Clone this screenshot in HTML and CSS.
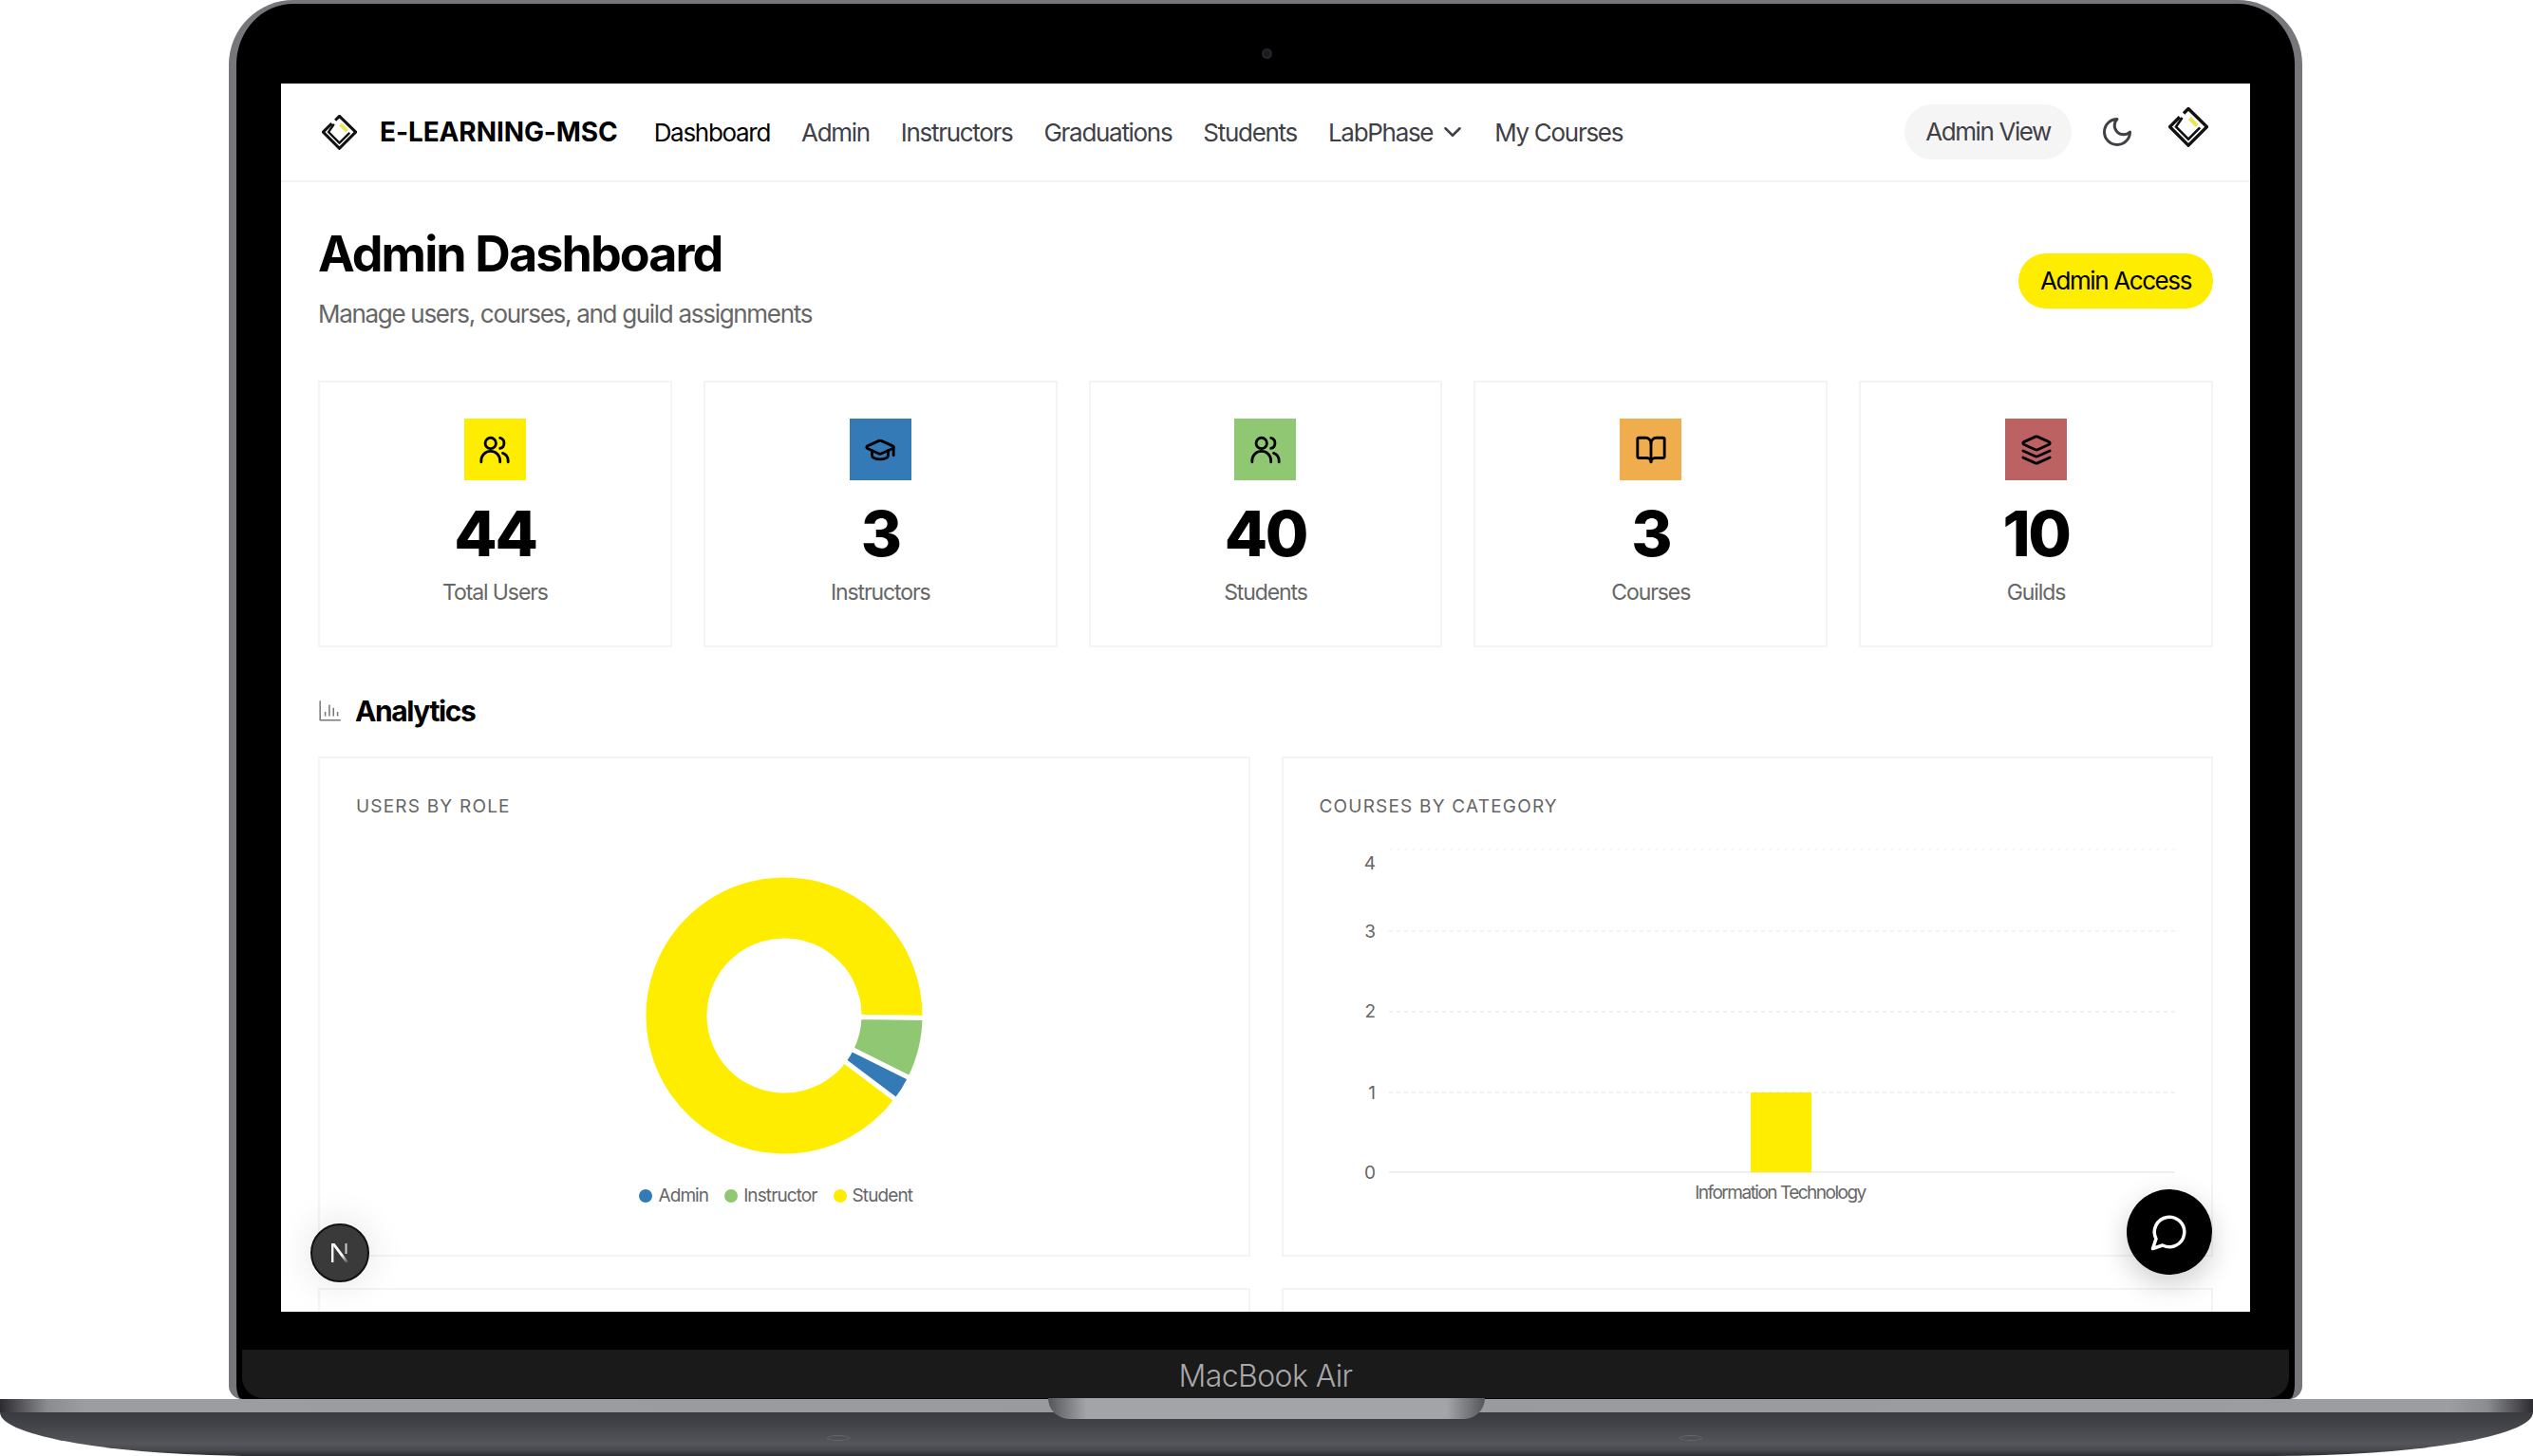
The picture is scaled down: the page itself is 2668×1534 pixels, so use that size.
FILE: index.html
```html
<!DOCTYPE html>
<html lang="en">
<head>
    <meta charset="UTF-8">
    <meta name="viewport" content="width=device-width, initial-scale=1.0">
    <title>Admin Dashboard</title>
    <link rel="stylesheet" href="styles.css">
</head>
<body>
    <svg class="defs" width="0" height="0">
        <symbol id="logo" viewBox="0 0 110 110">
            <path class="logo-yellow" d="M58 30 79 51"/>
            <path class="logo-line" d="M31 27 4 54 55 105 106 54 55 4 42 17"/>
            <path class="logo-thin" d="M38 29 21 54 55 88 87 56"/>
        </symbol>
    </svg>

    <div class="lid">
        <span class="camera"></span>
        <div class="screen">
            <nav class="nav">
                <svg class="logo"><use href="#logo"/></svg>
                <span class="brand">E-LEARNING-MSC</span>
                <a class="link active">Dashboard</a>
                <a class="link">Admin</a>
                <a class="link">Instructors</a>
                <a class="link">Graduations</a>
                <a class="link">Students</a>
                <a class="link link-menu">LabPhase
                    <svg class="icon chevron" viewBox="0 0 24 24"><path d="m6 9 6 6 6-6"/></svg>
                </a>
                <a class="link">My Courses</a>
                <span class="view-pill">Admin View</span>
                <svg class="icon moon" viewBox="0 0 24 24"><path d="M12 3a6 6 0 0 0 9 9 9 9 0 1 1-9-9Z"/></svg>
                <svg class="logo logo-user"><use href="#logo"/></svg>
            </nav>

            <main class="main">
                <header class="head">
                    <div>
                        <h1>Admin Dashboard</h1>
                        <p>Manage users, courses, and guild assignments</p>
                    </div>
                    <span class="access">Admin Access</span>
                </header>

                <section class="stats">
                    <div class="stat">
                        <span class="stat-icon yellow">
                            <svg class="icon" viewBox="0 0 24 24"><circle cx="9" cy="7" r="4"/><path d="M2 21v-1a7 7 0 0 1 14 0v1"/><path d="M22 21v-1a6 6 0 0 0-4-5.6"/><path d="M16 3.13a4 4 0 0 1 0 7.75"/></svg>
                        </span>
                        <strong>44</strong>
                        <span class="stat-label">Total Users</span>
                    </div>
                    <div class="stat">
                        <span class="stat-icon blue">
                            <svg class="icon" viewBox="0 0 24 24"><path d="M21.42 10.922a1 1 0 0 0-.019-1.838L12.83 5.18a2 2 0 0 0-1.66 0L2.6 9.08a1 1 0 0 0 0 1.832l8.57 3.908a2 2 0 0 0 1.66 0z"/><path d="M22 10v6"/><path d="M6 12.5V16a6 3 0 0 0 12 0v-3.5"/></svg>
                        </span>
                        <strong>3</strong>
                        <span class="stat-label">Instructors</span>
                    </div>
                    <div class="stat">
                        <span class="stat-icon green">
                            <svg class="icon" viewBox="0 0 24 24"><circle cx="9" cy="7" r="4"/><path d="M2 21v-1a7 7 0 0 1 14 0v1"/><path d="M22 21v-1a6 6 0 0 0-4-5.6"/><path d="M16 3.13a4 4 0 0 1 0 7.75"/></svg>
                        </span>
                        <strong>40</strong>
                        <span class="stat-label">Students</span>
                    </div>
                    <div class="stat">
                        <span class="stat-icon orange">
                            <svg class="icon" viewBox="0 0 24 24"><path d="M12 7v14"/><path d="M3 18a1 1 0 0 1-1-1V4a1 1 0 0 1 1-1h5a4 4 0 0 1 4 4 4 4 0 0 1 4-4h5a1 1 0 0 1 1 1v13a1 1 0 0 1-1 1h-6a3 3 0 0 0-3 3 3 3 0 0 0-3-3z"/></svg>
                        </span>
                        <strong>3</strong>
                        <span class="stat-label">Courses</span>
                    </div>
                    <div class="stat">
                        <span class="stat-icon red">
                            <svg class="icon" viewBox="0 0 24 24"><path d="m12.83 2.18a2 2 0 0 0-1.66 0L2.6 6.08a1 1 0 0 0 0 1.83l8.58 3.91a2 2 0 0 0 1.66 0l8.58-3.9a1 1 0 0 0 0-1.83Z"/><path d="m22 17.65-9.17 4.16a2 2 0 0 1-1.66 0L2 17.65"/><path d="m22 12.65-9.17 4.16a2 2 0 0 1-1.66 0L2 12.65"/></svg>
                        </span>
                        <strong>10</strong>
                        <span class="stat-label">Guilds</span>
                    </div>
                </section>

                <h2 class="section-title">
                    <svg class="icon chart-icon" viewBox="0 0 24 24"><path d="M2 2v19h20"/><path d="M7 17v-4M11 17V6M15 17V9M19 17v-4"/></svg>
                    Analytics
                </h2>

                <section class="charts">
                    <div class="chart">
                        <h3>USERS BY ROLE</h3>
                        <svg class="donut" viewBox="-148 -148 296 296">
                            <path class="slice-student" d="M118.2 89.1A148 148 0 1 1 148 2.6L79 1.4A79 79 0 1 0 63.1 47.5Z"/>
                            <path class="slice-instructor" d="M148 2.6A148 148 0 0 1 132.5 66L70.7 35.2A79 79 0 0 0 79 1.4Z"/>
                            <path class="slice-admin" d="M132.5 66A148 148 0 0 1 118.2 89.1L63.1 47.5A79 79 0 0 0 70.7 35.2Z"/>
                        </svg>
                        <div class="legend">
                            <span class="legend-item"><i class="dot blue"></i>Admin</span>
                            <span class="legend-item"><i class="dot green"></i>Instructor</span>
                            <span class="legend-item"><i class="dot yellow"></i>Student</span>
                        </div>
                    </div>
                    <div class="chart">
                        <h3>COURSES BY CATEGORY</h3>
                        <svg class="bars" viewBox="0 0 901 400">
                            <path class="grid grid-top" d="M73 15H901"/>
                            <path class="grid" d="M73 101H901M73 186H901M73 271H901"/>
                            <path class="axis" d="M73 355H901"/>
                            <rect class="bar" x="454" y="271" width="64" height="84"/>
                            <text x="59" y="36">4</text>
                            <text x="59" y="108">3</text>
                            <text x="59" y="192">2</text>
                            <text x="59" y="278">1</text>
                            <text x="59" y="362">0</text>
                            <text class="tick" x="485" y="383">Information Technology</text>
                        </svg>
                    </div>
                    <div class="chart"></div>
                    <div class="chart"></div>
                </section>
            </main>

            <span class="next-badge">
                <svg viewBox="0 0 20 20" width="20" height="20">
                    <defs>
                        <linearGradient id="fade" x1="0" y1="0" x2="1" y2="1">
                            <stop offset="0.6" stop-color="#fff"/>
                            <stop offset="1" stop-color="#fff" stop-opacity="0"/>
                        </linearGradient>
                    </defs>
                    <rect x="1" y="0" width="2.4" height="20" fill="#fff"/>
                    <rect x="15.5" y="0" width="2" height="11" fill="#ccc"/>
                    <polygon points="1,0 4.6,0 19.5,20 16,20" fill="url(#fade)"/>
                </svg>
            </span>
            <span class="chat-button">
                <svg class="icon" viewBox="0 0 24 24"><path d="M7.9 20A9 9 0 1 0 4 16.1L2 22Z"/></svg>
            </span>
        </div>
        <div class="chin">MacBook Air</div>
    </div>

    <div class="base">
        <div class="strip"></div>
        <div class="deck">
            <span class="foot foot-left"></span>
            <span class="foot foot-right"></span>
        </div>
        <div class="notch"></div>
    </div>
</body>
</html>
```

FILE: styles.css
```css
* {
    box-sizing: border-box;
}

html, body {
    margin: 0;
    padding: 0;
}

body {
    width: 2668px;
    height: 1534px;
    overflow: hidden;
    background: #fff;
    font-family: "Inter", "Liberation Sans", sans-serif;
    color: #000;
}

.defs {
    position: absolute;
}

/* laptop frame */
.lid {
    position: relative;
    width: 2184px;
    height: 1474px;
    margin-left: 241px;
    padding: 84px 47px 1px;
    background: #000;
    border: solid #77777b;
    border-width: 4px 8px 0;
    border-radius: 68px 68px 14px 14px;
}

.camera {
    position: absolute;
    top: 47px;
    left: 1080px;
    width: 11px;
    height: 11px;
    border-radius: 50%;
    background: #1c1c20;
    border: 2px solid #26262a;
}

.screen {
    position: relative;
    height: 1294px;
    overflow: hidden;
    background: #fff;
}

.chin {
    height: 51px;
    margin: 40px -41px 0;
    background: #1a1a1a;
    border-radius: 0 0 22px 22px;
    color: #a8a8aa;
    font-size: 32px;
    font-weight: 300;
    line-height: 56px;
    letter-spacing: -0.6px;
    text-align: center;
}

.base {
    position: relative;
    height: 60px;
}

.strip {
    height: 14px;
    background: linear-gradient(90deg, #2c2c30 0, #8b8c90 50px, #9c9da1 90px, #999a9e 50%, #9c9da1 2580px, #8b8c90 2620px, #2c2c30 100%);
}

.deck {
    height: 46px;
    background: linear-gradient(180deg, #3a3b3f 0, #45464b 35%, #55565c 72%, #45464b 88%, #2b2c2f 100%);
    border-radius: 0 0 274px 274px / 0 0 46px 46px;
}

.foot {
    position: absolute;
    top: 38px;
    width: 24px;
    height: 6px;
    border-radius: 50%;
    border: 1px solid #66676c;
}

.foot-left {
    left: 871px;
}

.foot-right {
    left: 1769px;
}

.notch {
    position: absolute;
    top: -1px;
    left: 1104px;
    width: 460px;
    height: 22px;
    background: linear-gradient(90deg, #55565a 0, #a3a4a8 40px, #a3a4a8 420px, #55565a 100%);
    border-radius: 0 0 22px 22px;
}

/* nav */
.nav {
    display: flex;
    align-items: center;
    height: 104px;
    padding: 0 44px 0 43px;
    border-bottom: 2px solid #f3f3f3;
}

.logo {
    width: 37px;
    height: 37px;
    flex: none;
}

.logo-yellow {
    fill: none;
    stroke: #e9e64e;
    stroke-width: 11;
}

.logo-line {
    fill: none;
    stroke: #111;
    stroke-width: 9;
}

.logo-thin {
    fill: none;
    stroke: #111;
    stroke-width: 7;
}

.logo-user {
    width: 42px;
    height: 42px;
    margin: -10px 0 0 36px;
}

.brand {
    margin: 0 38px 0 24px;
    font-size: 28px;
    font-weight: 700;
    letter-spacing: -0.1px;
}

.link {
    margin-right: 33px;
    font-size: 26px;
    letter-spacing: -1.3px;
    color: #3f3f46;
}

.link.active {
    color: #000;
}

.link-menu {
    display: flex;
    align-items: center;
    gap: 6px;
    margin-right: 29px;
}

.icon {
    width: 34px;
    height: 34px;
    fill: none;
    stroke: #000;
    stroke-width: 2;
    stroke-linecap: round;
    stroke-linejoin: round;
}

.chevron {
    width: 30px;
    height: 30px;
    stroke: #3f3f46;
}

.view-pill {
    margin-left: auto;
    padding: 0 22px;
    height: 58px;
    line-height: 58px;
    border-radius: 29px;
    background: #f5f5f5;
    font-size: 26px;
    letter-spacing: -1.4px;
    color: #3f3f46;
}

.moon {
    width: 36px;
    height: 36px;
    margin-left: 30px;
    stroke: #3f3f46;
}

/* page content */
.main {
    padding: 46px 39px 0;
}

.head {
    display: flex;
    justify-content: space-between;
    align-items: center;
}

.head h1 {
    margin: 0;
    font-size: 52px;
    font-weight: 700;
    line-height: 60px;
    letter-spacing: -1.9px;
}

.head p {
    margin: 15px 0 0;
    font-size: 26px;
    line-height: 35px;
    letter-spacing: -1.3px;
    color: #666;
}

.access {
    margin-top: 6px;
    padding: 0 23px;
    height: 58px;
    line-height: 57px;
    border-radius: 29px;
    background: #ffed00;
    font-size: 26px;
    letter-spacing: -1.4px;
}

.stats {
    display: grid;
    grid-template-columns: repeat(5, minmax(0, 1fr));
    gap: 33px;
    margin-top: 53px;
}

.stat {
    display: flex;
    flex-direction: column;
    align-items: center;
    height: 281px;
    padding-top: 38px;
    border: 2px solid #f4f4f4;
}

.stat-icon {
    display: flex;
    align-items: center;
    justify-content: center;
    width: 65px;
    height: 65px;
}

.yellow {
    background: #ffed00;
}

.blue {
    background: #337ab7;
}

.green {
    background: #8fc773;
}

.orange {
    background: #f0ad4e;
}

.red {
    background: #bd6262;
}

.stat strong {
    margin-top: 16px;
    font-size: 66px;
    font-weight: 800;
    line-height: 80px;
    letter-spacing: -2.4px;
}

.stat-label {
    margin-top: 6px;
    font-size: 23px;
    line-height: 32px;
    letter-spacing: -1.1px;
    color: #666;
}

.section-title {
    display: flex;
    align-items: center;
    gap: 13px;
    margin: 49px 0 30px;
    font-size: 30px;
    font-weight: 700;
    line-height: 36px;
    letter-spacing: -1.4px;
}

.chart-icon {
    width: 26px;
    height: 26px;
    stroke: #777;
    stroke-width: 1.4;
    stroke-linecap: butt;
}

.charts {
    display: grid;
    grid-template-columns: repeat(2, minmax(0, 1fr));
    gap: 33px;
}

.chart {
    height: 527px;
    padding: 38px;
    border: 2px solid #f4f4f4;
}

.chart h3 {
    margin: 0;
    font-size: 19px;
    font-weight: 400;
    line-height: 26px;
    letter-spacing: 1.2px;
    color: #666;
}

.donut {
    display: block;
    width: 296px;
    height: 296px;
    margin: 59px auto 0;
}

.donut path {
    stroke: #fff;
    stroke-width: 5;
}

.slice-student {
    fill: #ffed00;
}

.slice-instructor {
    fill: #8fc773;
}

.slice-admin {
    fill: #337ab7;
}

.legend {
    display: flex;
    justify-content: center;
    gap: 17px;
    margin: 29px 17px 0 0;
    font-size: 19px;
    line-height: 26px;
    letter-spacing: -0.9px;
    color: #666;
}

.legend-item {
    display: flex;
    align-items: center;
    gap: 6px;
}

.dot {
    width: 14px;
    height: 14px;
    border-radius: 50%;
}

.bars {
    display: block;
    width: 901px;
    height: 400px;
    margin-top: 17px;
}

.bars text {
    font-size: 19px;
    fill: #666;
    text-anchor: end;
}

.bars .tick {
    letter-spacing: -1.5px;
    text-anchor: middle;
}

.grid {
    fill: none;
    stroke: #f2f2f2;
    stroke-width: 2;
    stroke-dasharray: 4 4;
}

.grid-top {
    stroke: #f9f9f9;
}

.axis {
    fill: none;
    stroke: #efefef;
    stroke-width: 2;
}

.bar {
    fill: #ffed00;
}

/* floating buttons */
.next-badge {
    position: absolute;
    left: 31px;
    bottom: 31px;
    display: flex;
    align-items: center;
    justify-content: center;
    width: 62px;
    height: 62px;
    border-radius: 50%;
    background: #3a3a3a;
    border: 2px solid #111;
    box-shadow: 0 0 40px rgba(0, 0, 0, 0.12);
}

.chat-button {
    position: absolute;
    right: 40px;
    bottom: 39px;
    display: flex;
    align-items: center;
    justify-content: center;
    width: 90px;
    height: 90px;
    border-radius: 50%;
    background: #000;
    box-shadow: 0 10px 30px rgba(0, 0, 0, 0.2);
}

.chat-button .icon {
    width: 42px;
    height: 42px;
    stroke: #fff;
}
```
